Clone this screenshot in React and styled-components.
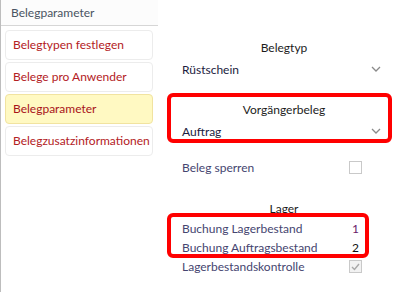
import React from 'react';
import styled, { createGlobalStyle } from 'styled-components';

const GlobalStyle = createGlobalStyle`
  html, body {
    margin: 0;
    padding: 0;
    background: #ffffff;
  }
  body {
    font-family: Lato, "Noto Sans", sans-serif;
    font-size: 12px;
  }
`;

const menu = [
  { label: 'Belegtypen festlegen' },
  { label: 'Belege pro Anwender' },
  { label: 'Belegparameter', active: true },
  { label: 'Belegzusatzinformationen' },
];

const Chevron = () => (
  <svg width='10' height='6' viewBox='0 0 10 6'>
    <polyline points='1,1 5,5 9,1' fill='none' stroke='#8a8a8a' strokeWidth='1.3' />
  </svg>
);

const App = () => {
  return (
    <Screen>
      <GlobalStyle />
      <Sidebar>
        <SideHeader>Belegparameter</SideHeader>
        <MenuList>
          {menu.map((m) => (
            <MenuItem key={m.label} $active={m.active}>
              {m.label}
            </MenuItem>
          ))}
        </MenuList>
      </Sidebar>

      <Content>
        <Title>Belegtyp</Title>
        <SelectRow>
          <span>Rüstschein</span>
          <Chevron />
        </SelectRow>

        <Marked $top={7} $bottom={1} $left={15} $right={-6} $gap={20}>
          <Title>Vorgängerbeleg</Title>
          <SelectRow>
            <span>Auftrag</span>
            <Chevron />
          </SelectRow>
        </Marked>

        <FieldRow $gap={14} $height={22}>
          <Label>Beleg sperren</Label>
          <Control>
            <Checkbox />
          </Control>
        </FieldRow>

        <Title $gap={21}>Lager</Title>
        <Marked $top={6} $bottom={1} $left={15} $right={17} $gap={0}>
          <FieldRow>
            <Label>Buchung Lagerbestand</Label>
            <Control>
              <Value $color='#6a1a6a'>1</Value>
            </Control>
          </FieldRow>
          <FieldRow>
            <Label>Buchung Auftragsbestand</Label>
            <Control>
              <Value $color='#111111'>2</Value>
            </Control>
          </FieldRow>
        </Marked>
        <FieldRow>
          <Label>Lagerbestandskontrolle</Label>
          <Control>
            <Checkbox $checked>
              <svg width='9' height='8' viewBox='0 0 9 8'>
                <polyline points='1,4 3.5,6.5 8,1' fill='none' stroke='#a8a8a8' strokeWidth='1.4' />
              </svg>
            </Checkbox>
          </Control>
        </FieldRow>
      </Content>
    </Screen>
  );
};

export default App;

const Screen = styled.div`
  width: 401px;
  height: 292px;
  display: flex;
  overflow: hidden;
  background: #ffffff;
`;

const Sidebar = styled.div`
  width: 157px;
  border-left: 1px solid #bdbdbd;
  display: flex;
  flex-direction: column;
`;

const SideHeader = styled.div`
  height: 25px;
  line-height: 25px;
  margin-top: -1px;
  padding-left: 10px;
  color: #4a5462;
  background: #fcfcfc;
  border-top: 1px solid #e6e6e6;
  border-bottom: 1px solid #d6d6d6;
`;

const MenuList = styled.div`
  display: flex;
  flex-direction: column;
  gap: 2px;
  padding: 4px 5px 0 4px;
`;

const MenuItem = styled.div`
  height: 28px;
  line-height: 28px;
  padding-left: 7px;
  border-radius: 4px;
  color: ${(p) => (p.$active ? '#a8141a' : '#b32024')};
  background: ${(p) => (p.$active ? '#fff9c2' : '#ffffff')};
  border: 1px solid ${(p) => (p.$active ? '#f1e3a0' : '#ececec')};
  white-space: nowrap;
`;

const Content = styled.div`
  flex: 1;
  display: flex;
  flex-direction: column;
  padding: 38px 15px 0 24px;
`;

const Title = styled.div`
  height: 20px;
  line-height: 20px;
  text-align: center;
  color: #1c1c1c;
  margin-top: ${(p) => p.$gap || 0}px;
`;

const SelectRow = styled.div`
  height: 22px;
  display: flex;
  align-items: center;
  justify-content: space-between;
  padding-right: 5px;
  color: #1c1c40;
`;

const Marked = styled.div`
  position: relative;
  margin-top: ${(p) => p.$gap}px;

  &::after {
    content: '';
    position: absolute;
    top: -${(p) => p.$top}px;
    bottom: -${(p) => p.$bottom}px;
    left: -${(p) => p.$left}px;
    right: ${(p) => p.$right}px;
    border: 4px solid #ff0000;
    border-radius: 6px;
    pointer-events: none;
  }
`;

const FieldRow = styled.div`
  height: ${(p) => p.$height || 19}px;
  margin-top: ${(p) => p.$gap || 0}px;
  display: flex;
  align-items: center;
`;

const Label = styled.span`
  flex: 1;
  color: #454570;
`;

const Control = styled.div`
  width: 13px;
  margin-right: 24px;
  display: flex;
  justify-content: center;
`;

const Checkbox = styled.div`
  width: 11px;
  height: 11px;
  border: 1px solid #c9c9c9;
  background: ${(p) => (p.$checked ? '#f2f2f2' : '#ffffff')};
  display: flex;
  align-items: center;
  justify-content: center;
`;

const Value = styled.span`
  color: ${(p) => p.$color};
`;
